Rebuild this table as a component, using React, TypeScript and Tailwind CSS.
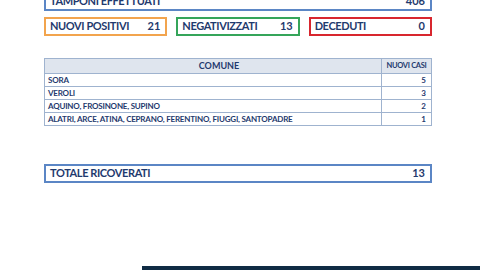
import React from 'react';

const StatBox: React.FC<{ label: string; value: string; border: string }> = ({ label, value, border }) => (
  <div className={`h-[19px] border-2 ${border} flex items-center justify-between pl-[4px] pr-[5px]`}>
    <span className="text-[11px] font-bold tracking-[-0.4px] text-[#1f3a6e]">{label}</span>
    <span className="text-[11px] font-bold text-[#1f3a6e]">{value}</span>
  </div>
);

const rows = [
  { comune: 'SORA', casi: '5' },
  { comune: 'VEROLI', casi: '3' },
  { comune: 'AQUINO, FROSINONE, SUPINO', casi: '2' },
  { comune: 'ALATRI, ARCE, ATINA, CEPRANO, FERENTINO, FIUGGI, SANTOPADRE', casi: '1' },
];

const App: React.FC = () => {
  return (
    <div className="w-[480px] h-[270px] bg-white overflow-hidden" style={{ fontFamily: 'Lato, "Open Sans", sans-serif' }}>
      <div className="w-[388px] ml-[44px]">
        <StatBox label="TAMPONI EFFETTUATI" value="406" border="border-[#5b86c5] -mt-[8px]" />
        <div className="grid grid-cols-3 gap-[9px] mt-[6px]">
          <StatBox label="NUOVI POSITIVI" value="21" border="border-[#f2a44e]" />
          <StatBox label="NEGATIVIZZATI" value="13" border="border-[#35a55a]" />
          <StatBox label="DECEDUTI" value="0" border="border-[#d8262e]" />
        </div>

        <table className="w-full mt-[22px] border-collapse text-[#1f3a6e]">
          <thead>
            <tr className="h-[15px] bg-[#dfe5ee]">
              <th className="border border-[#9fb3cf] text-[9px] font-bold text-center p-0 pl-[12px]">COMUNE</th>
              <th className="w-[50px] border border-[#9fb3cf] text-[7.5px] font-bold text-center p-0 tracking-[-0.3px]">NUOVI CASI</th>
            </tr>
          </thead>
          <tbody>
            {rows.map((r) => (
              <tr key={r.comune} className="h-[13px]">
                <td className="border border-[#9fb3cf] text-[8px] font-bold pl-[3px] py-0 leading-none tracking-[-0.2px]">{r.comune}</td>
                <td className="border border-[#9fb3cf] text-[8px] font-bold text-right pr-[5px] py-0 leading-none">{r.casi}</td>
              </tr>
            ))}
          </tbody>
        </table>

        <div className="mt-[38px]">
          <StatBox label="TOTALE RICOVERATI" value="13" border="border-[#5b86c5]" />
        </div>
      </div>
      <div className="ml-[142px] mt-[83px] h-[6px] bg-[#0f2b44]" />
    </div>
  );
};

export default App;
